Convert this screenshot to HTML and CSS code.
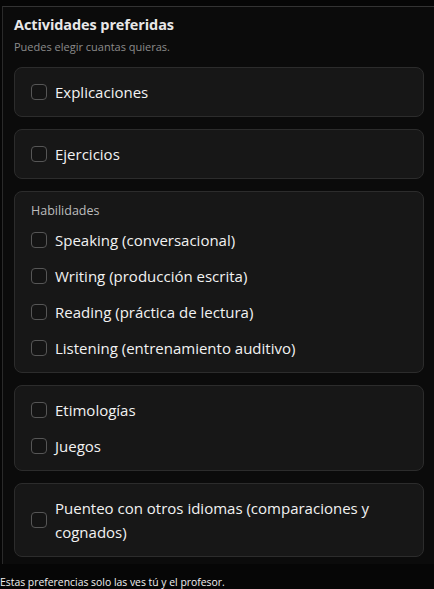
FILE: index.html
```html
<!DOCTYPE html>
<html lang="es">
<head>
<meta charset="utf-8">
<title>Actividades preferidas</title>
<link rel="stylesheet" href="styles.css">
</head>
<body>
<section class="panel">
  <h2 class="title">Actividades preferidas</h2>
  <p class="hint">Puedes elegir cuantas quieras.</p>
  <div class="cards">
    <div class="card">
      <label class="opt"><span class="box"></span><span class="txt">Explicaciones</span></label>
    </div>
    <div class="card">
      <label class="opt"><span class="box"></span><span class="txt">Ejercicios</span></label>
    </div>
    <div class="card">
      <div class="group">Habilidades</div>
      <label class="opt"><span class="box"></span><span class="txt">Speaking (conversacional)</span></label>
      <label class="opt"><span class="box"></span><span class="txt">Writing (producción escrita)</span></label>
      <label class="opt"><span class="box"></span><span class="txt">Reading (práctica de lectura)</span></label>
      <label class="opt"><span class="box"></span><span class="txt">Listening (entrenamiento auditivo)</span></label>
    </div>
    <div class="card">
      <label class="opt"><span class="box"></span><span class="txt">Etimologías</span></label>
      <label class="opt"><span class="box"></span><span class="txt">Juegos</span></label>
    </div>
    <div class="card">
      <label class="opt"><span class="box"></span><span class="txt">Puenteo con otros idiomas (comparaciones y cognados)</span></label>
    </div>
  </div>
</section>
<p class="foot">Estas preferencias solo las ves tú y el profesor.</p>
</body>
</html>
```
FILE: styles.css
```css
html, body {
  margin: 0;
  padding: 0;
}
body {
  background: #060606;
  font-family: "Open Sans", "Noto Sans", sans-serif;
  color: #f2f2f2;
  width: 434px;
  min-height: 589px;
}
.panel {
  margin: 6px 0 0 2px;
  border-top: 1px solid #333333;
  border-left: 1px solid #2a2a2a;
  background: #0b0b0b;
  padding: 8px 10px 7px 11px;
}
.title {
  margin: 0;
  font-size: 14.5px;
  font-weight: 700;
  line-height: 20px;
  color: #e8e8e8;
  letter-spacing: -0.1px;
}
.hint {
  margin: 5px 0 0;
  font-size: 11px;
  line-height: 14px;
  color: #8c8c8c;
}
.cards {
  margin-top: 13px;
  display: flex;
  flex-direction: column;
  gap: 12px;
}
.card {
  background: #171717;
  border: 1px solid #2c2c2c;
  border-radius: 8px;
  padding: 12px 16px;
  display: flex;
  flex-direction: column;
  gap: 12px;
}
.group {
  font-size: 12.5px;
  line-height: 13px;
  color: #bdbdbd;
  margin-bottom: -1px;
}
.opt {
  display: flex;
  align-items: center;
  gap: 8px;
  min-height: 24px;
  font-size: 15px;
  line-height: 24px;
}
.box {
  flex: none;
  width: 14px;
  height: 14px;
  border: 1px solid #565656;
  border-radius: 4px;
  background: #141414;
}
.txt {
  color: #f2f2f2;
}
.foot {
  margin: 11px 0 0;
  font-size: 10.4px;
  line-height: 14px;
  color: #f0f0f0;
}
```
